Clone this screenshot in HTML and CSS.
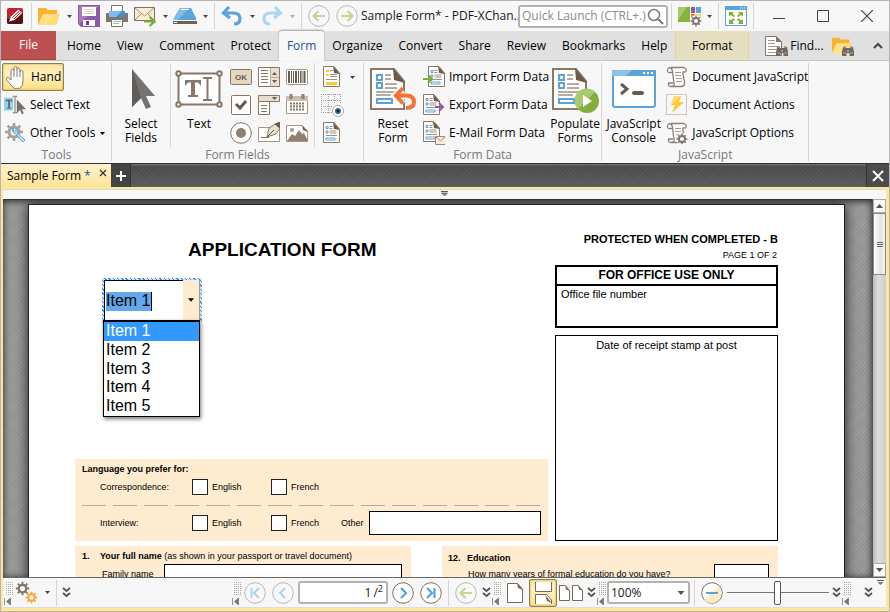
FILE: index.html
```html
<!DOCTYPE html>
<html lang="en">
<head>
<meta charset="utf-8">
<title>Sample Form* - PDF-XChange Editor</title>
<link rel="stylesheet" href="styles.css">
</head>
<body>
<svg class="defs" aria-hidden="true">
  <symbol id="caret" viewBox="0 0 7 4"><path d="M0 0h7L3.500 4z" fill="currentColor"/></symbol>
  <symbol id="form-doc" viewBox="0 0 44 44">
    <path d="M2 2H25L35 14V42H2z" fill="#fff" stroke="#8b7968" stroke-width="2"/>
    <path d="M24 1 36 16 25 13z" fill="#6b5b4c"/>
    <path d="M8 8h5v5H8zM8 16h5v5H8zM8 32h15v4H8z" fill="none" stroke="#5ba3d9" stroke-width="2"/>
    <path d="M16 8h6M16 12h6M16 17h12M16 21h12M7 25h22M7 28h15" stroke="#a09080" stroke-width="1.500"/>
  </symbol>
  <symbol id="small-doc" viewBox="0 0 22 22">
    <path d="M3.500 .500H14L19.500 7V20.500H3.500z" fill="#fff" stroke="#8b7968"/>
    <path d="M13 0 20 8 14 7z" fill="#6b5b4c"/>
    <path d="M6 4.500h2v2H6zM6 9h2v2H6zM6 16h9v2H6z" fill="none" stroke="#5ba3d9"/>
    <path d="M9.500 4.500h3M9.500 6.500h3M9.500 9h7M9.500 11h7M6 13.500h11" stroke="#a09080"/>
  </symbol>
  <symbol id="gear" viewBox="0 0 20 20">
    <circle cx="10" cy="10" r="5" fill="none" stroke="currentColor" stroke-width="3"/>
    <path d="M10 1v4M10 15v4M1 10h4M15 10h4M3.600 3.600l2.800 2.800M13.600 13.600l2.800 2.800M3.600 16.400l2.800-2.800M13.600 6.400l2.800-2.800" stroke="currentColor" stroke-width="2.500"/>
  </symbol>
  <symbol id="scroll" viewBox="0 0 22 22">
    <path d="M5 2Q2 1 1.500 4T4.500 6.500H7M4 2Q6 2 6.500 5.500C7 9 7 12 8 16.500Q9 20.500 5 20.500 2 20.500 2.500 17H7M5 1.500H18Q20.500 2.500 20 5 19.500 6.500 17 6C16 9 19 14 18.500 18Q18 20.500 15 20.500H5" fill="#fff" stroke="#8b7f75" stroke-width="1.300"/>
    <path d="M9 6.500h6M9 9.500h6M10 12.500h6M10 15.500h6" stroke="#a59b92"/>
  </symbol>
  <symbol id="binoculars" viewBox="0 0 12 12">
    <path d="M1 2h3v1h4V2h3l1 5v4H7.500V8h-3v3H0V7z" fill="#70675e"/><path d="M2 1h2v2H2zM8 1h2v2H8zM5 5h2v2H5z" fill="#a49a90"/><path d="M1 8h3M8 8h3" stroke="#aaa096"/>
  </symbol>
  <symbol id="chevrons" viewBox="0 0 9 11"><path d="M1 1l3.500 3L8 1M1 6l3.500 3L8 6" fill="none" stroke="#555" stroke-width="1.800"/></symbol>
  <symbol id="arrow-left" viewBox="0 0 22 22"><circle cx="11" cy="11" r="10.300" fill="#f8f8f8" stroke="#bdb7b0"/><path d="M17 11H6M10.500 6 5.500 11l5 5" fill="none" stroke="#c0d994" stroke-width="2.200"/></symbol>
  <symbol id="folder" viewBox="0 0 24 22">
    <path d="M1 3h8l2 2h9v14H1z" fill="#f9b233"/><path d="M6 9h17l-4 11H1z" fill="#ffdd75"/><path d="M6 9h12L9 20H1z" fill="#ffe69a" opacity=".5"/>
  </symbol>
  <symbol id="paging-page" viewBox="0 0 16 20"><path d="M.500.500H10.500L15.500 6V19.500H.500z" fill="#fff" stroke="#75685c"/><path d="M10 0 16 7 11 5z" fill="#75685c"/></symbol>
  <symbol id="half-page" viewBox="0 0 11 16"><path d="M.500.500H6L10.500 5.500V15.500H.500z" fill="#fff" stroke="#75685c"/><path d="M6 0l5 6-4-1.500z" fill="#75685c"/></symbol>
  <symbol id="anchor" viewBox="0 0 9 24"><path d="M2 1.500h7M2 3.500h7M2 5.500h7M2 7.500h7M2 9.500h7M2 11.500h7M2 13.500h7" stroke="#aaa" stroke-dasharray="1 1"/><path d="M.500 17v7M6.500 17v7l-4-3.500z" fill="#777" stroke="#777" stroke-width=".8"/></symbol>
</svg>

<div class="window">
<header class="titlebar">
  <button class="tool logo" aria-label="Application menu"><svg width="16" height="16" viewBox="0 0 16 16"><rect width="16" height="16" rx="2" fill="#c3242b"/><path d="M0 10Q8 14 16 5V14a2 2 0 0 1-2 2H2a2 2 0 0 1-2-2z" fill="#5a1013"/><path d="M2 13.500 4 8.500 11.500 1.500 15 5 7.500 12z" fill="#fff"/><path d="M5.500 9.500l7-6.500M7 11l6.500-6.500" stroke="#a01d22"/></svg></button>
  <i class="sep"></i>
  <button class="tool" aria-label="Open"><svg width="24" height="22"><use href="#folder"/></svg></button>
  <button class="drop" aria-label="Open options"><svg width="5" height="3"><use href="#caret"/></svg></button>
  <button class="tool" aria-label="Save"><svg width="22" height="22" viewBox="0 0 22 22"><path d="M0 0h22v22H3l-3-3z" fill="#8e5ba8"/><path d="M1 1h20L1 19z" fill="#aa7bc0"/><path d="M4 2h14v9H4z" fill="#fff"/><path d="M6 4.500h10M6 6.500h10M6 8.500h10" stroke="#d8cdb9"/><path d="M5 15h12v6H5z" fill="#fff"/><path d="M8 16h3v4H8z" fill="#6d3d8c"/></svg></button>
  <button class="tool" aria-label="Print"><svg width="22" height="22" viewBox="0 0 22 22"><path d="M5.500 .500h11v8h-11z" fill="#fff" stroke="#7e7167"/><path d="M0 8h22v9H0z" fill="#80766e"/><path d="M3 6h16v6H3z" fill="#3d8fcf"/><path d="M3 6h13l-6 6H3z" fill="#7fbdea"/><path d="M5.500 14.500h11v7h-11z" fill="#fff" stroke="#7e7167"/><path d="M7 16.500h8M7 18.500h6" stroke="#8cc5bd"/></svg></button>
  <button class="tool" aria-label="Send by e-mail"><svg width="22" height="22" viewBox="0 0 22 22"><path d="M.500 2.500h20v13H.500z" fill="#fbedd2" stroke="#7d7066"/><path d="M1 3l9.500 8L20 3M1 15l6-6M20 15l-6-6" fill="none" stroke="#9d9084"/><path d="M10 16.500h9M15.500 12l5 4.500-5 4.500" fill="none" stroke="#7cab3c" stroke-width="2.200"/></svg></button>
  <button class="drop" aria-label="E-mail options"><svg width="5" height="3"><use href="#caret"/></svg></button>
  <button class="tool" aria-label="Scan"><svg width="24" height="18" viewBox="0 0 24 18"><path d="M7 1h11l5 10q1 2-1 2H2q-2 0-1-2z" fill="#5ba3d9"/><path d="M7 1h9L5 13H2q-2 0-1-2z" fill="#82bce6"/><path d="M8 2.500h8" stroke="#fff"/><path d="M0 14h24v3H0z" fill="#6d635b"/><path d="M1 15.500h3" stroke="#fff"/></svg></button>
  <button class="drop" aria-label="Scan options"><svg width="5" height="3"><use href="#caret"/></svg></button>
  <i class="sep"></i>
  <button class="tool" aria-label="Undo"><svg width="22" height="20" viewBox="0 0 22 20"><path d="M8 1 2.500 7 9 12M3 7H12Q19 7 19 12.500T13 18" fill="none" stroke="#5ba3d9" stroke-width="3.200"/></svg></button>
  <button class="drop" aria-label="Undo history"><svg width="5" height="3"><use href="#caret"/></svg></button>
  <button class="tool" aria-label="Redo"><svg width="22" height="20" viewBox="0 0 22 20"><path d="M14 1 19.500 7 13 12M19 7H10Q3 7 3 12.500T9 18" fill="none" stroke="#add4f0" stroke-width="3.200"/></svg></button>
  <button class="drop faded" aria-label="Redo history"><svg width="5" height="3"><use href="#caret"/></svg></button>
  <i class="sep"></i>
  <button class="tool" aria-label="Previous view"><svg width="22" height="22"><use href="#arrow-left"/></svg></button>
  <button class="tool" aria-label="Next view"><svg class="flip" width="22" height="22"><use href="#arrow-left"/></svg></button>
  <h1 class="app-title">Sample Form* - PDF-XChan..</h1>
  <label class="search"><input type="text" placeholder="Quick Launch (CTRL+.)" aria-label="Quick Launch"><svg width="17" height="17" viewBox="0 0 17 17"><circle cx="7" cy="7" r="5.500" fill="none" stroke="#807870" stroke-width="1.500"/><path d="M11 11l5 5" stroke="#807870" stroke-width="2"/></svg></label>
  <i class="sep"></i>
  <button class="tool" aria-label="UI options"><svg width="25" height="22" viewBox="0 0 25 22"><path d="M1 2h12v15H1z" fill="#87b441"/><path d="M1 2h9L1 15z" fill="#a7c96f"/><path d="M14 2h4v6h-4z" fill="#8e5ba8"/><path d="M19 2h5v6h-5z" fill="#5ba3d9"/><path d="M14 9h4v7h-4z" fill="#f37335"/><path d="M19 9h5v6h-5z" fill="#ffd65a"/><circle cx="19" cy="16" r="6" fill="#f7f7f7"/><svg x="13" y="10" width="12" height="12" color="#80766e"><use href="#gear"/></svg></svg></button>
  <button class="drop" aria-label="UI options list"><svg width="5" height="3"><use href="#caret"/></svg></button>
  <i class="sep"></i>
  <button class="tool" aria-label="Full screen"><svg width="22" height="20" viewBox="0 0 22 20"><path d="M.500.500h21v19H.500z" fill="#fff" stroke="#5ba3d9"/><path d="M0 0h22v4H0z" fill="#5ba3d9"/><path d="M15 2h1M17 2h1M19 2h1" stroke="#fff"/><path d="M4 6h5L7.500 7.500 10 10 8.500 11 6 9 4 10.500zM18 6v4.500L16 9l-2.500 2L12 10l2.500-2.500L13 6zM4 18v-5l2 1.500L8.500 12l1.500 1.500L7.500 16 9 18zM18 18h-5l1.500-2L12 13.500l1.500-1.500 2.500 2.500 2-1.500z" fill="#83ad3c"/></svg></button>
  <i class="sep"></i>
  <button class="win-btn" aria-label="Minimize"><svg width="12" height="12"><path d="M0 8.500h12" stroke="#444"/></svg></button>
  <button class="win-btn" aria-label="Maximize"><svg width="12" height="12"><path d="M.500.500h11v11H.500z" fill="none" stroke="#444"/></svg></button>
  <button class="win-btn" aria-label="Close"><svg width="12" height="12"><path d="M0 0l12 12M12 0 0 12" stroke="#444" stroke-width="1.200"/></svg></button>
</header>

<nav class="menu">
  <button class="file">File</button>
  <button>Home</button><button>View</button><button>Comment</button><button>Protect</button><button class="current">Form</button><button>Organize</button><button>Convert</button><button>Share</button><button>Review</button><button>Bookmarks</button><button>Help</button>
  <button class="format">Format</button>
  <button class="find"><svg width="24" height="22" viewBox="0 0 24 22"><path d="M1.500 1.500H12L17.500 7V20.500H1.500z" fill="#fff" stroke="#80766e"/><path d="M12 1v6h6z" fill="#80766e"/><path d="M4 5.500h7M4 8.500h7M4 11.500h10M4 14.500h8M4 17.500h8" stroke="#a09890"/><use href="#binoculars" x="12" y="10" width="12" height="12"/></svg>Find...</button>
  <button class="find" aria-label="Find in files"><svg width="24" height="22" viewBox="0 0 24 22"><use href="#folder" width="24" height="20"/><use href="#binoculars" x="12" y="10" width="12" height="12"/></svg></button>
  <button class="collapse" aria-label="Collapse ribbon"><svg width="10" height="7"><path d="M1 6l4-4 4 4" fill="none" stroke="#444" stroke-width="2"/></svg></button>
</nav>

<section class="ribbon">
  <div class="group tools">
    <div class="group-body">
      <div class="stack">
        <button class="row-btn active"><svg width="22" height="24" viewBox="0 0 22 24"><path d="M6 13V5.500a1.500 1.500 0 0 1 3 0V3a1.500 1.500 0 0 1 3 0v1.500a1.500 1.500 0 0 1 3 0V7a1.500 1.500 0 0 1 3 0v9q0 5-3 7.300H9L2 15.500q-1.500-2 0-3 1.200-.8 4 2.500z" fill="#fff" stroke="#8a7c70"/><path d="M9 5v7M12 4v8M15 6v6" stroke="#8a7c70"/></svg>Hand</button>
        <button class="row-btn"><svg width="22" height="22" viewBox="0 0 24 22"><path d="M0 3h10v14H0z" fill="#8ed4f5"/><path d="M2 5h7v3L7.500 6.500h-1V14H8v1H3v-1h1.500V6.500h-1L2 8z" fill="#70665c"/><path d="M9.500 1.500h2l.500.500.500-.500h2M12 2v17M9.500 19.500h5" fill="none" stroke="#70665c"/><path d="M14 5v15l3.500-3.500 2 4.500 2-1-2-4.500H24z" fill="#75706c"/></svg>Select Text</button>
        <button class="row-btn"><svg width="22" height="22" viewBox="0 0 22 22"><use href="#gear" width="20" height="20" color="#a8a098"/><path d="M9 6a4 4 0 0 0 3 6l7 8 2-2-8-7a4 4 0 0 0-1-5v3l-2 1z" fill="#d8ecf9" stroke="#5ba3d9"/></svg>Other Tools<svg width="5" height="3"><use href="#caret"/></svg></button>
      </div>
    </div>
    <h2>Tools</h2>
  </div>

  <div class="group">
    <div class="group-body">
      <button class="big-btn spaced"><svg width="48" height="48" viewBox="0 0 48 48"><path d="M15 4v38l9-9 5 11 5-2-5-11h9z" fill="#77726e"/><path d="M15 4v38l9-9z" fill="#625d5a"/></svg><span>Select<br>Fields</span></button>
      <i class="rule"></i>
      <button class="big-btn wide"><svg width="48" height="48" viewBox="0 0 48 48"><path d="M3.500 8.500h41v31h-41z" fill="#fff" stroke="#877769" stroke-width="2"/><g fill="#fff" stroke="#877769" stroke-width="2"><circle cx="3.500" cy="8.500" r="2.200"/><circle cx="44.500" cy="8.500" r="2.200"/><circle cx="3.500" cy="39.500" r="2.200"/><circle cx="44.500" cy="39.500" r="2.200"/></g><path d="M10 15h16v6l-3-3.500h-3V30h3v2H13v-2h3V17.500h-3L10 21z" fill="#877769"/><path d="M28 13h9M28 35h9M32.500 13v22" stroke="#877769" stroke-width="2"/></svg><span>Text</span></button>
      <div class="fields">
        <button aria-label="Button"><svg width="22" height="22" viewBox="0 0 22 22"><rect x=".5" y="3.500" width="21" height="15" rx="1" fill="#e4d7c2" stroke="#877769"/><text x="11" y="14" text-anchor="middle" class="ok">OK</text></svg></button>
        <button aria-label="List box"><svg width="22" height="22" viewBox="0 0 22 22"><path d="M.500 1.500h21v19H.500z" fill="#fff" stroke="#877769"/><path d="M12 2h9v18h-9z" fill="#e9dfcf"/><path d="M12.500 2v18M13 11.500h8" stroke="#bcae9c"/><path d="M3 4.500h7M3 7.500h7M3 10.500h7M3 13.500h7M3 16.500h7" stroke="#877769"/><path d="M14 9h5l-2.500-3zM14 14h5l-2.500 3z" fill="#665b50"/></svg></button>
        <button aria-label="Barcode"><svg width="22" height="22" viewBox="0 0 22 22"><rect x=".5" y="3.500" width="21" height="15" rx="1" fill="#fff" stroke="#a59686"/><path d="M3 5v12M10 5v12M18.500 5v12" stroke="#665b50" stroke-width="2"/><path d="M5.500 5v12M7.500 5v12M12.500 5v12M14.500 5v12M16 5v12" stroke="#665b50"/></svg></button>
        <button aria-label="Check box"><svg width="22" height="22" viewBox="0 0 22 22"><rect x="1.500" y="1.500" width="19" height="19" rx="1" fill="#fff" stroke="#877769"/><path d="M6 10l4 4 6-7" fill="none" stroke="#665b50" stroke-width="3"/></svg></button>
        <button aria-label="Drop-down"><svg width="22" height="22" viewBox="0 0 22 22"><path d="M.500 1.500h21v6H.500z" fill="#e9dfcf" stroke="#877769"/><path d="M.500 7.500h11v13H.500z" fill="#fff" stroke="#877769"/><path d="M14 3h5l-2.500 3z" fill="#665b50"/><path d="M3 11.500h6M3 14.500h6M3 17.500h6" stroke="#877769"/></svg></button>
        <button aria-label="Date"><svg width="22" height="22" viewBox="0 0 22 22"><path d="M.500 2.500h21v17H.500z" fill="#fff" stroke="#a59686"/><path d="M0 2h22v5H0z" fill="#c9beb1"/><path d="M5 0v5M17 0v5" stroke="#8f8071" stroke-width="3"/><path d="M4 9.500h15M4 12.500h15M4 15.500h15" stroke="#877769" stroke-width="2" stroke-dasharray="2 1"/></svg></button>
        <button aria-label="Radio button"><svg width="22" height="22" viewBox="0 0 22 22"><circle cx="11" cy="11" r="10.300" fill="#fff" stroke="#877769"/><circle cx="11" cy="11" r="5" fill="#8f8071"/></svg></button>
        <button aria-label="Signature"><svg width="22" height="22" viewBox="0 0 22 22"><path d="M.500 5.500h21v14H.500z" fill="#fff" stroke="#a59686"/><path d="M3 15.500h8" stroke="#877769"/><path d="M9 15l2-9 6-4 5 4-4 6z" fill="#e9dfcf" stroke="#877769"/><path d="M9 15l7-7M17 2l5-2v6z" fill="#665b50" stroke="#665b50"/></svg></button>
        <button aria-label="Image"><svg width="22" height="22" viewBox="0 0 22 22"><path d="M.500 3.500H16L21.500 9V19.500H.500z" fill="#fff" stroke="#a59686"/><path d="M16 3l6 7-5-2z" fill="#665b50"/><path d="M1 19l5-7 3 2 4-6 3 4 2-1 4 8z" fill="#8f8071"/><circle cx="6" cy="8" r="2" fill="#a59686"/></svg></button>
      </div>
      <i class="rule"></i>
      <div class="extras">
        <button aria-label="Highlight fields"><svg width="22" height="22" viewBox="0 0 22 22"><path d="M2.500 .500H13L18.500 7V20.500H2.500z" fill="#fff" stroke="#8b7968"/><path d="M12 0 19 8 13 7z" fill="#6b5b4c"/><path d="M5 4h3v2H5zM5 8h3v2H5zM5 16h11v3H5z" fill="#ffc734"/><path d="M9 4.500h3M9 8.500h7M9 10.500h7M5 13.500h11" stroke="#a09080"/></svg></button>
        <button class="drop" aria-label="Highlight options"><svg width="5" height="3"><use href="#caret"/></svg></button>
        <button aria-label="Tab order"><svg width="24" height="24" viewBox="0 0 24 24"><path d="M1 1.500h20M1 7.500h20M1 13.500h12M1 19.500h12M1.500 1v19M8.500 1v19M14.500 1v9M20.500 1v9" stroke="#aaa29a" stroke-dasharray="1 1"/><circle cx="18" cy="18" r="5.500" fill="#fff" stroke="#b5a99c"/><circle cx="18" cy="18" r="3" fill="#2d6f9f"/><circle cx="18" cy="18" r="1.500" fill="#222"/></svg></button>
        <button class="new-row" aria-label="Field list"><svg width="22" height="22" viewBox="1 0 22 22"><use href="#small-doc" width="22" height="22"/></svg></button>
      </div>
    </div>
    <h2>Form Fields</h2>
  </div>

  <div class="group">
    <div class="group-body">
      <button class="big-btn spaced"><svg width="48" height="48" viewBox="0 0 48 48"><use href="#form-doc" y="2" width="44" height="44"/><path d="M33 24 26 31l8 8M27 31H38Q44 31 44 37T37 43" fill="none" stroke="#f7f7f7" stroke-width="7"/><path d="M34 23 27 30.500l7 8M28 30.500H38Q45 31 45 37T37 43" fill="none" stroke="#f37335" stroke-width="4"/></svg><span>Reset<br>Form</span></button>
      <div class="stack">
        <button class="row-btn"><svg width="22" height="22" viewBox="0 0 22 22"><use href="#small-doc" x="2" width="22" height="22"/><path d="M0 13h8M5 9l4 4-4 4" fill="none" stroke="#7cab3c" stroke-width="2"/></svg>Import Form Data</button>
        <button class="row-btn"><svg width="22" height="22" viewBox="0 0 22 22"><use href="#small-doc" x="-3" width="22" height="22"/><path d="M12 13h8M16 9l4 4-4 4" fill="none" stroke="#8e5ba8" stroke-width="2"/></svg>Export Form Data</button>
        <button class="row-btn"><svg width="22" height="24" viewBox="0 0 22 24"><use href="#small-doc" x="-3" width="22" height="22"/><path d="M12.500 15.500h10v8h-10z" fill="#fbedd2" stroke="#9b8a7a"/><path d="M13 16l4.500 4 4.500-4" fill="none" stroke="#9b8a7a"/></svg>E-Mail Form Data</button>
      </div>
      <button class="big-btn"><svg width="48" height="48" viewBox="0 0 48 48"><use href="#form-doc" y="2" width="44" height="44"/><circle cx="36" cy="36" r="12" fill="#83ad3c"/><path d="M27 44A12 12 0 0 1 44 27z" fill="#a7c96f"/><path d="M32 30v12l9-6z" fill="#fff"/></svg><span>Populate<br>Forms</span></button>
    </div>
    <h2>Form Data</h2>
  </div>

  <div class="group script">
    <div class="group-body">
      <button class="big-btn"><svg width="48" height="48" viewBox="0 0 48 48"><rect x="3" y="6" width="42" height="36" rx="2" fill="#fff" stroke="#5ba3d9" stroke-width="2"/><path d="M2 5h44v6H2z" fill="#5ba3d9"/><path d="M2 5h20l-6 6H2z" fill="#8cc1e8"/><path d="M33 8h2M37 8h2M41 8h2" stroke="#fff" stroke-width="2"/><path d="M11 19l6 5-6 5" fill="none" stroke="#665b50" stroke-width="3"/><path d="M24 28h8" stroke="#665b50" stroke-width="4" stroke-linecap="round"/></svg><span>JavaScript<br>Console</span></button>
      <div class="stack">
        <button class="row-btn"><svg width="22" height="22"><use href="#scroll"/></svg>Document JavaScript</button>
        <button class="row-btn"><svg width="22" height="22" viewBox="0 0 22 22"><path d="M.500.500h20v20H.500z" fill="none" stroke="#9b9288" stroke-dasharray="1 1"/><path d="M8 2h7l-2 6h5L6 19l3-8H5z" fill="#ffc734"/><path d="M8 2h7L5 11z" fill="#ffdd75"/></svg>Document Actions</button>
        <button class="row-btn"><svg width="22" height="22" viewBox="0 0 22 22"><use href="#scroll" width="22" height="22"/><circle cx="16" cy="17" r="6" fill="#f7f7f7"/><use href="#gear" x="10" y="11" width="12" height="12" color="#80766e"/></svg>JavaScript Options</button>
      </div>
    </div>
    <h2>JavaScript</h2>
  </div>
</section>

<div class="doc-tabs">
  <button class="doc-tab">Sample Form <b>*</b><svg width="8" height="8"><path d="M1 1l6 6M7 1 1 7" stroke="#333" stroke-width="1.200"/></svg></button>
  <button class="new-tab" aria-label="New tab"><svg width="12" height="12"><path d="M6 1v10M1 6h10" stroke="#fff" stroke-width="2"/></svg></button>
  <button class="close-doc" aria-label="Close document"><svg width="12" height="12"><path d="M1 1l10 10M11 1 1 11" stroke="#fff" stroke-width="2"/></svg></button>
</div>

<div class="frame">
  <div class="splitter"><svg width="7" height="5" viewBox="0 0 7 5"><path d="M0 .500h7" stroke="#555"/><path d="M.500 2h6L3.500 5z" fill="#888" stroke="#555" stroke-width=".7"/></svg></div>
  <div class="viewer">
    <main class="canvas">
      <article class="sheet">
        <div class="top">
          <div class="left">
            <h3 class="form-title">APPLICATION FORM</h3>
            <div class="combo">
              <div class="combo-box">
                <span class="combo-text"><input type="text" value="Item 1" aria-label="Item"></span>
                <button aria-label="Show items"><svg width="6" height="4"><use href="#caret"/></svg></button>
              </div>
              <ul class="options" role="listbox">
                <li role="option" aria-selected="true" class="chosen">Item 1</li><li role="option">Item 2</li><li role="option">Item 3</li><li role="option">Item 4</li><li role="option">Item 5</li>
              </ul>
            </div>
            <div class="panel language">
              <b>Language you prefer for:</b>
              <div class="choices">
                <span>Correspondence:</span>
                <label><input type="checkbox">English</label>
                <label><input type="checkbox">French</label>
              </div>
              <svg class="dashes" height="1"><path d="M0 .500h1000" stroke="#b3ab9f" stroke-width="1" stroke-dasharray="24 7"/></svg>
              <div class="choices">
                <span>Interview:</span>
                <label><input type="checkbox">English</label>
                <label><input type="checkbox">French</label>
                <label for="other">Other</label>
                <input class="field" id="other" type="text">
              </div>
            </div>
          </div>
          <div class="right">
            <b class="protected">PROTECTED WHEN COMPLETED - B</b>
            <span class="page-no">PAGE 1 OF 2</span>
            <div class="office"><b>FOR OFFICE USE ONLY</b><p>Office file number</p></div>
            <div class="stamp">Date of receipt stamp at post</div>
          </div>
        </div>
        <div class="bottom">
          <div class="panel question">
            <p><b class="num">1.</b><span><b>Your full name</b> (as shown in your passport or travel document)</span></p>
            <div class="answer"><label for="family">Family name</label><input class="field" id="family" type="text"></div>
          </div>
          <div class="panel question education">
            <p><b class="num">12.</b><b>Education</b></p>
            <div class="answer"><label for="years">How many years of formal education do you have?</label><input class="field" id="years" type="text"></div>
          </div>
        </div>
      </article>
    </main>
    <div class="scrollbar">
      <button aria-label="Scroll up"><svg class="turn" width="7" height="4"><use href="#caret"/></svg></button>
      <div class="track"><div class="thumb"><i></i></div></div>
      <button aria-label="Scroll down"><svg width="7" height="4"><use href="#caret"/></svg></button>
    </div>
  </div>

  <footer class="status">
    <svg class="anchor" width="9" height="24"><use href="#anchor"/></svg>
    <button class="gears" aria-label="Options"><svg width="24" height="24" viewBox="0 0 24 24"><use href="#gear" width="15" height="15" color="#80766e"/><use href="#gear" x="10" y="10" width="13" height="13" color="#f9a72f"/></svg></button>
    <button class="drop" aria-label="More options"><svg width="5" height="3"><use href="#caret"/></svg></button>
    <i class="sep"></i>
    <button class="more narrow" aria-label="More"><svg width="9" height="11"><use href="#chevrons"/></svg></button>

    <svg class="anchor push" width="9" height="24"><use href="#anchor"/></svg>
    <button class="tool" aria-label="First page"><svg width="22" height="22" viewBox="0 0 22 22"><circle cx="11" cy="11" r="10.300" fill="#f8f8f8" stroke="#bdb7b0"/><path d="M7.500 6v10M15 6l-5 5 5 5" fill="none" stroke="#a9d4f0" stroke-width="2"/></svg></button>
    <button class="tool" aria-label="Previous page"><svg width="22" height="22" viewBox="0 0 22 22"><circle cx="11" cy="11" r="10.300" fill="#f8f8f8" stroke="#bdb7b0"/><path d="M13 6l-5 5 5 5" fill="none" stroke="#a9d4f0" stroke-width="2"/></svg></button>
    <label class="page-box"><input type="text" value="1" aria-label="Page"><span>/<sup>2</sup></span></label>
    <button class="tool" aria-label="Next page"><svg width="22" height="22" viewBox="0 0 22 22"><circle cx="11" cy="11" r="10.300" fill="#fff" stroke="#80705f"/><path d="M9 6l5 5-5 5" fill="none" stroke="#55a3dc" stroke-width="2.200"/></svg></button>
    <button class="tool" aria-label="Last page"><svg width="22" height="22" viewBox="0 0 22 22"><circle cx="11" cy="11" r="10.300" fill="#fff" stroke="#80705f"/><path d="M7 6l5 5-5 5M14.500 6v10" fill="none" stroke="#55a3dc" stroke-width="2.200"/></svg></button>
    <i class="sep"></i>
    <button class="tool" aria-label="Back"><svg width="22" height="22"><use href="#arrow-left"/></svg></button>
    <button class="more narrow" aria-label="More navigation"><svg width="9" height="11"><use href="#chevrons"/></svg></button>
    <svg class="anchor" width="9" height="24"><use href="#anchor"/></svg>
    <button class="tool" aria-label="Single page"><svg width="16" height="20"><use href="#paging-page"/></svg></button>
    <button class="tool active" aria-label="Continuous"><svg width="17" height="22" viewBox="0 0 17 22"><path d="M.500 0v9.500h16V0M.500 22V12.500h11l5 5.500V22" fill="#fff" stroke="#75685c"/><path d="M10 13l7 8-5-2z" fill="#75685c"/></svg></button>
    <button class="tool" aria-label="Two pages"><svg width="25" height="16" viewBox="0 0 25 16"><use href="#half-page" width="11" height="16"/><use href="#half-page" x="13" width="11" height="16"/></svg></button>
    <button class="more narrow" aria-label="More layouts"><svg width="9" height="11"><use href="#chevrons"/></svg></button>
    <svg class="anchor" width="9" height="24"><use href="#anchor"/></svg>
    <span class="zoom"><select aria-label="Zoom"><option>100%</option></select><svg width="8" height="4"><use href="#caret"/></svg></span>
    <i class="sep"></i>
    <button class="tool" aria-label="Zoom out"><svg width="22" height="22" viewBox="0 0 22 22"><circle cx="11" cy="11" r="10.300" fill="#fff" stroke="#80705f"/><path d="M3 18A10 10 0 0 0 18 4z" fill="#fdebc8"/><path d="M5 11h12" stroke="#55a3dc" stroke-width="2"/></svg></button>
    <input class="slider" type="range" min="0" max="100" value="49" aria-label="Zoom level">
    <button class="more narrow" aria-label="More zoom"><svg width="9" height="11"><use href="#chevrons"/></svg></button>
    <svg class="anchor" width="9" height="24"><use href="#anchor"/></svg>
    <button class="more last" aria-label="More tools"><svg width="9" height="11"><use href="#chevrons"/></svg></button>
    <svg class="corner" width="7" height="5" viewBox="0 0 7 5"><path d="M0 .500h7" stroke="#555"/><path d="M.500 2h6L3.500 5z" fill="#777"/></svg>
  </footer>
</div>
</div>
</body>
</html>
```
FILE: styles.css
```css
* { box-sizing: border-box; }
html, body { height: 100%; }
body { margin: 0; font: 12px/16px "Open Sans", "Noto Sans", sans-serif; color: #1a1a1a; background: #f7f7f7; overflow: hidden; }
button { font: inherit; color: inherit; background: none; border: 0; padding: 0; margin: 0; display: flex; align-items: center; justify-content: center; white-space: nowrap; }
input, select { font: inherit; color: inherit; margin: 0; border-radius: 0; }
h1, h2, h3, p, ul { margin: 0; padding: 0; font-size: inherit; font-weight: normal; }
svg { display: block; flex: none; }
.defs { position: absolute; width: 0; height: 0; }
.flip { transform: scaleX(-1); }
.turn { transform: rotate(180deg); }

.window { display: flex; flex-direction: column; height: 100vh; border: 1px solid #b4b4b4; }

/* Title bar */
.titlebar { display: flex; align-items: center; height: 30px; flex: none; }
.tool { width: 28px; height: 28px; flex: none; }
.logo { width: 27px; }
.drop { width: 12px; height: 28px; flex: none; color: #444; }
.faded { color: #aaa; }
.sep { width: 1px; height: 26px; margin: 0 3px; background: #d4d4d4; flex: none; }
.app-title { flex: 1; min-width: 0; white-space: nowrap; }
.search { display: flex; align-items: center; width: 150px; height: 23px; padding: 0 2px; border: 2px solid #b2b2b2; border-radius: 3px; background: #fff; flex: none; }
.search input { flex: 1; min-width: 0; border: 0; padding: 0; background: none; outline: 0; }
.search input::placeholder { color: #8c8c8c; }
.win-btn { width: 44px; height: 28px; flex: none; }

/* Ribbon tabs */
.menu { display: flex; height: 30px; flex: none; background: #e0e0e0; border-bottom: 1px solid #c4c4c4; }
.menu button { flex: none; padding: 0 8px; color: #000; }
.menu .file { width: 55px; margin-right: 3px; color: #fff; background: #bd5151; border-bottom: 1px solid #a04030; }
.menu .current { background: #f7f7f7; color: #24529c; margin-bottom: -1px; border-radius: 3px 3px 0 0; box-shadow: 0 -1px 2px #999; }
.menu .format { width: 74px; background: #e5dfc0; border: solid #e8d48a; border-width: 0 1px; }
.menu .find { gap: 2px; padding: 0 3px; }
.menu .format + .find { margin-left: 12px; }
.menu .collapse { margin-left: auto; padding: 0 6px; }

/* Ribbon */
.ribbon { display: flex; flex: none; height: 102px; padding-top: 2px; color: #000; }
.group { display: flex; flex-direction: column; flex: none; border-right: 1px solid #d6d6d6; margin-bottom: 2px; }
.tools { width: 111px; padding-left: 1px; }
.group-body { display: flex; height: 84px; }
.group h2 { text-align: center; color: #777; }
.stack { display: flex; flex-direction: column; align-items: flex-start; }
.row-btn { height: 28px; gap: 4px; padding: 0 0 0 1px; }
.tools .row-btn { padding: 0 2px; }
.active { background: linear-gradient(#ffe7a3, #fff0c0 45%, #ffdf80); border: 1px solid #94814a; border-radius: 2px; box-shadow: inset 0 0 2px #b19443; }
.big-btn { flex-direction: column; justify-content: flex-start; min-width: 52px; padding: 2px 0 0; line-height: 14px; }
.big-btn span { margin-top: 4px; }
.spaced { margin: 0 3px; }
.wide { min-width: 56px; }
.script .big-btn { min-width: 63px; }
.rule { width: 1px; background: #d6d6d6; }
.fields { display: grid; grid-template-columns: repeat(3, 28px); grid-auto-rows: 28px; padding-right: 3px; }
.extras { display: grid; grid-template-columns: 28px 12px; grid-auto-rows: 28px; padding: 0 5px 0 3px; }
.new-row { grid-column: 1; }
.ok { font: bold 8px "Liberation Sans", sans-serif; fill: #665b50; }

/* Document tabs */
.doc-tabs { display: flex; flex: none; height: 24px; border-top: 1px solid #333; background: repeating-linear-gradient(45deg, #00000008 0 1px, #0000 1px 3px), repeating-linear-gradient(-45deg, #ffffff08 0 1px, #0000 1px 3px), linear-gradient(#6a6a6a 0 1px, #4c4c4c 2px, #5c5c5c); }
.doc-tab { gap: 3px; width: 110px; padding: 0 4px 0 6px; color: #000; background: linear-gradient(#fff1cd, #ffe497); justify-content: flex-start; }
.doc-tab b { color: #24529c; font-weight: normal; }
.doc-tab svg { margin: 0 0 6px auto; }
.new-tab { width: 20px; border-right: 1px solid #333; background: #444; }
.close-doc { width: 23px; margin-left: auto; border-left: 1px solid #333; background: #4c4c4c; }

/* Document frame */
.frame { display: flex; flex-direction: column; flex: 1; min-height: 0; border: solid #ffe699; border-width: 2px 3px 3px 2px; }
.splitter { display: flex; justify-content: center; flex: none; height: 10px; padding-top: 1px; border-top: 1px solid #d8d8d8; background: #f7f7f7; }
.viewer { display: flex; flex: 1; min-height: 0; border-bottom: 1px solid #666; }
.canvas { flex: 1; min-width: 0; overflow: hidden; padding: 4px 27px 0 25px; background: repeating-linear-gradient(45deg, #0000000a 0 1px, #0000 1px 3px), repeating-linear-gradient(-45deg, #ffffff12 0 1px, #0000 1px 3px), #989898; box-shadow: inset 0 1px 7px #222; border-top: 1px solid #333; }
.sheet { border: 1px solid #222; background: #fff; box-shadow: 0 0 12px #222; padding: 26px 66px 0 46px; font: 9px/12px "Liberation Sans", Arial, sans-serif; color: #000; min-height: 200%; }
.top { display: grid; grid-template-columns: 1fr 223px; gap: 7px; }
.left { display: flex; flex-direction: column; }
.form-title { font-size: 19px; font-weight: bold; line-height: 22px; padding: 8px 0 0 113px; }

.combo { position: relative; width: 100px; margin: 17px 0 0 27px; font-size: 16px; line-height: 18px; }
.combo-box { display: flex; height: 45px; border: 2px solid transparent; background: linear-gradient(#fff, #fff) padding-box, repeating-linear-gradient(45deg, #3b8fe0 0 1px, #cfe6fa 1px 3px) border-box; }
.combo-text { flex: 1; display: flex; align-items: center; padding-left: 1px; border: solid #000; border-width: 1px 0 0 1px; }
.combo-text input { width: 46px; height: 19px; padding: 0; border: 0; border-right: 1px solid #000; background: #61a9ec; outline: 0; }
.combo-box button { width: 17px; background: #ffebcd; border: solid #a59a88; border-width: 0 1px 1px 0; color: #000; }
.options { position: absolute; top: 42px; left: 1px; width: 97px; height: 97px; display: flex; flex-direction: column; border: 1px solid #000; border-top-width: 2px; background: #fff; box-shadow: 1px 2px 4px #0008; list-style: none; }
.options li { flex: 1; padding-left: 2px; }
.chosen { background: #3399ff; color: #fff; }

.panel { background: #ffebd0; }
.language { display: flex; flex-direction: column; margin-top: auto; padding: 4px 7px 5px; min-height: 82px; }
.language > b { height: 12px; }
.choices { display: grid; grid-template-columns: 92px 79px 70px 28px 1fr; align-items: center; height: 24px; padding-left: 18px; }
.choices label { display: flex; align-items: center; gap: 4px; }
.choices input[type="checkbox"] { appearance: none; width: 16px; height: 16px; border: 1px solid #222; background: #fff; }
.dashes { width: 100%; margin: 6px 0 5px; }
.field { min-width: 0; height: 24px; border: 1px solid #000; background: #fff; padding: 0 4px; }

.right { display: flex; flex-direction: column; }
.protected { font-size: 11px; line-height: 16px; text-align: right; white-space: nowrap; }
.page-no { line-height: 16px; text-align: right; padding-right: 1px; }
.office { margin-top: 2px; border: 2px solid #000; font-size: 11px; height: 63px; }
.office b { display: block; text-align: center; font-size: 12px; line-height: 17px; border-bottom: 2px solid #000; }
.office p { padding: 2px 4px; }
.stamp { margin-top: 7px; height: 206px; padding-top: 3px; border: 1px solid #000; text-align: center; font-size: 11px; }

.bottom { display: grid; grid-template-columns: 336px 336px; justify-content: space-between; margin-top: 5px; }
.question { padding: 4px 9px 20px 7px; }
.question p { display: flex; }
.num { width: 18px; }
.answer { display: flex; align-items: flex-start; justify-content: space-between; gap: 10px; padding: 2px 0 0 20px; line-height: 20px; }
.answer .field { flex: 1; }
.education { padding: 6px 9px 20px 6px; }
.education .num { width: 19px; }
.education .answer { padding-top: 0; }
.education .field { flex: 0 0 55px; }

.scrollbar { display: flex; flex-direction: column; width: 14px; flex: none; border-left: 1px solid #555; background: #d0d0d0; }
.scrollbar button { height: 14px; background: #f7f7f7; border: 1px solid #aaa; color: #555; }
.track { flex: 1; background: linear-gradient(90deg, #bbb, #ddd 40%, #ccc); }
.thumb { display: flex; align-items: center; justify-content: center; height: 62px; border: 1px solid #888; background: linear-gradient(90deg, #fff, #e4e4e4 60%, #f4f4f4); }
.thumb i { width: 6px; height: 5px; background: repeating-linear-gradient(#666 0 1px, #0000 1px 2px); }

/* Status bar */
.status { display: flex; align-items: center; flex: none; height: 30px; padding-left: 1px; border-bottom: 1px solid #ddd; background: #f7f7f7; }
.gears { width: 28px; }
.more { width: 16px; height: 28px; }
.narrow { width: 12px; }
.push { margin-left: auto; }
.page-box { display: flex; align-items: center; width: 90px; height: 23px; margin: 0 1px; padding: 0 3px; border: 2px solid #b2b2b2; border-radius: 3px; background: #fff; }
.page-box input { flex: 1; min-width: 0; border: 0; padding: 0 2px; text-align: right; background: none; outline: 0; }
.page-box sup { font-size: 9px; line-height: 0; }
.zoom { position: relative; width: 83px; height: 23px; margin: 0 1px; }
.zoom select { appearance: none; width: 100%; height: 100%; padding: 0 2px; border: 2px solid #b2b2b2; border-radius: 3px; background: #fff; outline: 0; }
.zoom svg { position: absolute; right: 5px; top: 10px; color: #555; pointer-events: none; }
.slider { appearance: none; width: 102px; height: 24px; margin: 0 1px; background: linear-gradient(#777, #777) center / 100% 1px no-repeat; outline: 0; }
.slider::-webkit-slider-thumb { appearance: none; width: 7px; height: 24px; border: 1px solid #555; border-radius: 2px; background: #fff; }
.last { width: 18px; margin-left: 8px; }
.corner { align-self: flex-start; margin: 2px 2px 0 0; }
```
